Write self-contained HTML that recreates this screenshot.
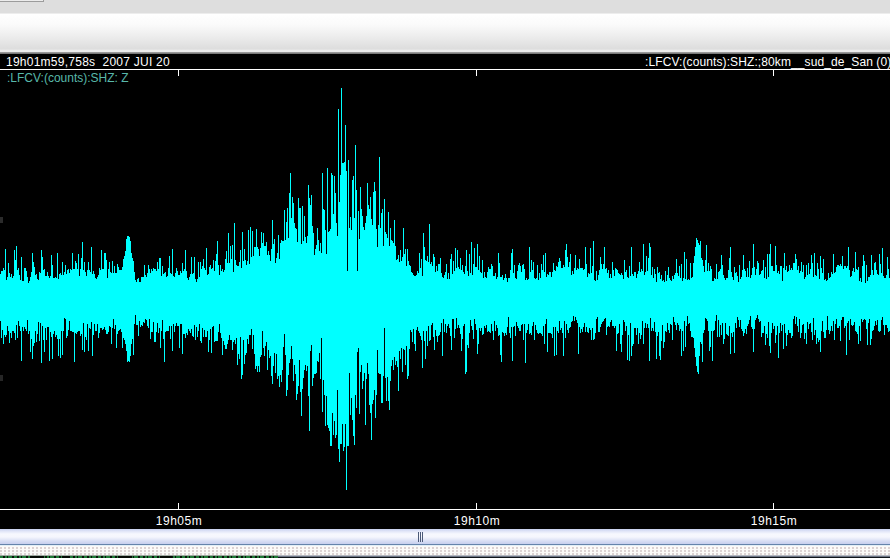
<!DOCTYPE html>
<html><head><meta charset="utf-8"><title>Seismogram</title>
<style>
html,body{margin:0;padding:0;}
body{width:890px;height:558px;overflow:hidden;background:#000;position:relative;font-family:"Liberation Sans",Arial,sans-serif;font-size:12px;line-height:14px;color:#fff;}
.abs{position:absolute;}
#topbar{left:0;top:0;width:890px;height:13px;background:#dedede;}
#topbox{left:0;top:0;width:43px;height:1px;background:#ececec;border-bottom:1px solid #9c9c9c;border-right:1px solid #9c9c9c;}
#toolbar{left:0;top:13px;width:890px;height:39px;background:linear-gradient(#e4e4e4 0px,#ffffff 1.5px,#fafafa 12px,#ececec 24px,#dedede 35px,#dedede 36px,#ececec 37.5px,#ececec 39px);}
#tbline{left:0;top:52px;width:890px;height:2px;background:linear-gradient(#a8a8a8,#6a6a6a);}
#plot{left:0;top:54px;width:890px;height:475px;background:#000;}
.t{white-space:nowrap;height:14px;}
#t1{left:6px;top:55px;letter-spacing:0.25px;}
#t2{left:645px;top:55px;letter-spacing:0.1px;}
#t3{left:7px;top:71px;color:#58b8aa;}
.hl{left:0;width:890px;height:1px;background:#fff;}
.tk{width:1px;background:#fff;}
.lb{width:60px;text-align:center;top:514px;letter-spacing:0.5px;}
#sb{left:0;top:529px;width:890px;height:17px;background:linear-gradient(#c6cfec 0px,#dfe4f7 2px,#f7f8fe 5px,#f5f6fd 8px,#d8def4 12px,#c6cfee 15px,#6584ab 15px,#6584ab 16px,#e2eef6 16px,#e2eef6 17px);}
#grip i{position:absolute;top:0;width:1px;height:10px;background:#4c5a78;}
#dots{left:0;top:546px;width:890px;height:9px;background-color:#fbfaf8;background-image:radial-gradient(circle at 1px 1px,#dcd3d3 0.8px,transparent 1.2px);background-size:4px 3px;background-position:0 1px;}
#bot0{left:0;top:555px;width:890px;height:3px;background:linear-gradient(#b4b8c0 0,#b4b8c0 1px,#6c7484 1px,#6c7484 2px,#10151b 2px,#10151b 3px);}
#bot1{left:0;top:555px;width:278px;height:1px;background:#9fa9a1;}
#bot{left:0;top:556px;width:278px;height:2px;background-color:#1f7a36;background-image:linear-gradient(90deg,transparent 0,transparent 30px,#050a05 30px,#050a05 44px,transparent 44px,transparent 62px,#050a05 62px,#050a05 70px,transparent 70px,transparent 118px,#050a05 118px,#050a05 132px,transparent 132px,transparent 160px,#050a05 160px,#050a05 172px,transparent 172px),repeating-linear-gradient(90deg,transparent 0,transparent 3px,#07140a 3px,#07140a 5px,transparent 5px,transparent 7px,#07140a 7px,#07140a 8px,transparent 8px,transparent 12px,#07140a 12px,#07140a 14px);}
</style></head><body>
<div class="abs" id="topbar"></div><div class="abs" id="topbox"></div>
<div class="abs" id="toolbar"></div><div class="abs" id="tbline"></div>
<div class="abs" id="plot"></div>
<div class="abs t" id="t1">19h01m59,758s&nbsp; 2007 JUI 20</div>
<div class="abs t" id="t2">:LFCV:(counts):SHZ:;80km__sud_de_San (0)</div>
<div class="abs hl" style="top:69px"></div>
<div class="abs t" id="t3">:LFCV:(counts):SHZ: Z</div>
<div class="abs tk" style="left:178px;top:70px;height:6px"></div>
<div class="abs tk" style="left:476px;top:70px;height:6px"></div>
<div class="abs tk" style="left:773px;top:70px;height:6px"></div>
<svg class="abs" style="left:0;top:0" width="890" height="558" viewBox="0 0 890 558" shape-rendering="crispEdges"><path d="M0.5 274V321M1.5 271V338M2.5 271V330M3.5 268V344M4.5 270V335M5.5 249V337M6.5 280V335M7.5 277V326M8.5 263V331M9.5 273V343M10.5 277V333M11.5 274V338M12.5 278V331M13.5 276V331M14.5 250V333M15.5 260V340M16.5 246V325M17.5 270V338M18.5 268V321M19.5 275V326M20.5 280V331M21.5 257V361M22.5 281V327M23.5 281V331M24.5 268V327M25.5 268V329M26.5 271V331M27.5 277V320M28.5 283V334M29.5 281V331M30.5 277V352M31.5 272V339M32.5 253V359M33.5 262V346M34.5 267V343M35.5 275V331M36.5 274V342M37.5 279V334M38.5 280V322M39.5 272V341M40.5 273V323M41.5 250V363M42.5 257V326M43.5 270V340M44.5 269V352M45.5 276V328M46.5 276V340M47.5 272V327M48.5 276V327M49.5 278V361M50.5 276V332M51.5 255V337M52.5 265V359M53.5 278V334M54.5 278V331M55.5 277V337M56.5 278V335M57.5 253V339M58.5 279V356M59.5 274V339M60.5 273V358M61.5 275V331M62.5 262V355M63.5 275V331M64.5 272V318M65.5 265V319M66.5 274V338M67.5 270V336M68.5 269V330M69.5 273V321M70.5 269V331M71.5 270V331M72.5 253V332M73.5 269V332M74.5 269V362M75.5 261V333M76.5 263V334M77.5 269V332M78.5 254V331M79.5 276V331M80.5 269V336M81.5 258V334M82.5 242V350M83.5 270V323M84.5 262V352M85.5 272V337M86.5 276V340M87.5 270V324M88.5 262V351M89.5 270V328M90.5 272V329M91.5 247V322M92.5 274V356M93.5 271V335M94.5 274V324M95.5 278V331M96.5 279V331M97.5 277V324M98.5 275V338M99.5 268V333M100.5 270V328M101.5 250V328M102.5 269V330M103.5 269V329M104.5 253V327M105.5 253V330M106.5 260V334M107.5 278V334M108.5 269V332M109.5 262V326M110.5 272V327M111.5 273V344M112.5 261V328M113.5 273V319M114.5 266V329M115.5 273V325M116.5 273V348M117.5 264V334M118.5 267V331M119.5 270V330M120.5 270V329M121.5 270V332M122.5 267V348M123.5 259V338M124.5 256V340M125.5 251V344M126.5 239V351M127.5 236V362M128.5 236V361M129.5 237V362M130.5 241V356M131.5 253V344M132.5 258V339M133.5 261V355M134.5 272V324M135.5 280V315M136.5 282V325M137.5 279V325M138.5 278V336M139.5 282V321M140.5 282V327M141.5 277V325M142.5 277V326M143.5 277V322M144.5 265V323M145.5 275V319M146.5 277V320M147.5 273V326M148.5 265V328M149.5 269V319M150.5 273V339M151.5 269V332M152.5 271V332M153.5 268V322M154.5 269V342M155.5 269V342M156.5 271V332M157.5 262V323M158.5 269V333M159.5 258V328M160.5 258V348M161.5 276V331M162.5 266V320M163.5 274V339M164.5 273V362M165.5 272V332M166.5 277V331M167.5 276V331M168.5 268V331M169.5 256V326M170.5 273V339M171.5 274V326M172.5 249V351M173.5 276V324M174.5 277V332M175.5 273V326M176.5 268V323M177.5 271V326M178.5 275V326M179.5 275V348M180.5 271V324M181.5 273V324M182.5 263V354M183.5 271V334M184.5 269V334M185.5 250V338M186.5 271V333M187.5 278V335M188.5 280V329M189.5 277V331M190.5 274V333M191.5 257V329M192.5 274V336M193.5 273V337M194.5 257V325M195.5 279V340M196.5 282V327M197.5 279V337M198.5 262V331M199.5 277V324M200.5 262V341M201.5 269V343M202.5 266V328M203.5 259V337M204.5 268V330M205.5 270V337M206.5 248V337M207.5 275V331M208.5 274V352M209.5 267V340M210.5 265V329M211.5 269V353M212.5 268V327M213.5 260V326M214.5 271V342M215.5 261V341M216.5 254V341M217.5 241V341M218.5 265V332M219.5 275V324M220.5 265V333M221.5 271V338M222.5 269V355M223.5 272V341M224.5 270V345M225.5 259V349M226.5 251V349M227.5 263V344M228.5 233V340M229.5 263V335M230.5 246V340M231.5 259V340M232.5 245V350M233.5 272V342M234.5 223V340M235.5 260V344M236.5 265V338M237.5 266V365M238.5 266V354M239.5 262V359M240.5 250V337M241.5 268V379M242.5 232V375M243.5 261V340M244.5 249V364M245.5 260V355M246.5 265V353M247.5 261V339M248.5 230V344M249.5 264V335M250.5 227V335M251.5 257V329M252.5 231V349M253.5 256V335M254.5 247V354M255.5 247V369M256.5 229V366M257.5 247V372M258.5 249V366M259.5 256V372M260.5 248V357M261.5 232V355M262.5 243V331M263.5 233V348M264.5 246V356M265.5 246V346M266.5 242V342M267.5 255V370M268.5 251V350M269.5 255V358M270.5 261V356M271.5 249V376M272.5 220V384M273.5 244V366M274.5 239V353M275.5 263V373M276.5 258V354M277.5 253V379M278.5 235V376M279.5 259V387M280.5 243V375M281.5 240V382M282.5 241V370M283.5 241V347M284.5 210V334M285.5 240V355M286.5 222V396M287.5 208V390M288.5 238V375M289.5 193V363M290.5 173V359M291.5 218V346M292.5 197V359M293.5 203V381M294.5 223V365M295.5 228V374M296.5 229V400M297.5 242V394M298.5 198V386M299.5 208V360M300.5 208V392M301.5 244V416M302.5 206V389M303.5 241V378M304.5 216V370M305.5 237V365M306.5 243V371M307.5 236V366M308.5 185V396M309.5 198V431M310.5 205V351M311.5 195V345M312.5 226V386M313.5 233V378M314.5 255V374M315.5 249V374M316.5 245V373M317.5 228V361M318.5 240V362M319.5 251V353M320.5 243V379M321.5 253V338M322.5 173V412M323.5 209V380M324.5 210V395M325.5 230V426M326.5 254V396M327.5 168V425M328.5 232V428M329.5 231V431M330.5 229V446M331.5 173V446M332.5 175V413M333.5 214V435M334.5 176V421M335.5 193V438M336.5 223V435M337.5 236V390M338.5 109V449M339.5 202V462M340.5 175V444M341.5 88V444M342.5 163V424M343.5 163V451M344.5 162V447M345.5 125V424M346.5 171V490M347.5 271V446M348.5 160V446M349.5 228V373M350.5 217V415M351.5 230V398M352.5 180V420M353.5 176V436M354.5 218V445M355.5 145V395M356.5 190V408M357.5 271V352M358.5 211V348M359.5 239V414M360.5 187V372M361.5 209V365M362.5 216V389M363.5 227V381M364.5 230V373M365.5 223V425M366.5 216V379M367.5 183V363M368.5 205V374M369.5 209V405M370.5 197V413M371.5 219V440M372.5 225V404M373.5 192V400M374.5 182V390M375.5 191V418M376.5 229V395M377.5 247V350M378.5 225V373M379.5 157V374M380.5 228V374M381.5 213V403M382.5 209V403M383.5 246V376M384.5 199V328M385.5 232V378M386.5 234V401M387.5 238V377M388.5 212V401M389.5 246V410M390.5 228V381M391.5 240V366M392.5 241V360M393.5 243V370M394.5 220V357M395.5 246V365M396.5 260V361M397.5 259V367M398.5 255V391M399.5 262V351M400.5 250V359M401.5 261V348M402.5 257V372M403.5 228V349M404.5 254V350M405.5 249V365M406.5 266V346M407.5 249V379M408.5 261V376M409.5 265V349M410.5 266V330M411.5 272V332M412.5 273V342M413.5 275V329M414.5 276V344M415.5 276V351M416.5 275V330M417.5 271V327M418.5 273V331M419.5 253V333M420.5 268V336M421.5 259V340M422.5 276V368M423.5 233V331M424.5 247V341M425.5 260V359M426.5 261V331M427.5 256V346M428.5 262V326M429.5 224V341M430.5 264V340M431.5 262V325M432.5 266V323M433.5 254V337M434.5 257V350M435.5 272V330M436.5 266V336M437.5 271V342M438.5 264V336M439.5 264V335M440.5 258V332M441.5 273V323M442.5 277V356M443.5 278V319M444.5 275V332M445.5 272V324M446.5 264V333M447.5 279V326M448.5 273V324M449.5 279V328M450.5 259V336M451.5 254V350M452.5 274V319M453.5 261V319M454.5 271V338M455.5 248V329M456.5 268V318M457.5 250V328M458.5 267V325M459.5 269V328M460.5 258V334M461.5 270V351M462.5 265V339M463.5 272V326M464.5 274V324M465.5 266V374M466.5 250V372M467.5 271V345M468.5 276V348M469.5 254V333M470.5 273V320M471.5 242V326M472.5 275V330M473.5 264V339M474.5 248V319M475.5 267V324M476.5 267V330M477.5 244V354M478.5 270V344M479.5 256V328M480.5 272V331M481.5 273V328M482.5 260V335M483.5 278V334M484.5 272V326M485.5 277V328M486.5 278V325M487.5 272V332M488.5 267V331M489.5 269V332M490.5 269V333M491.5 264V324M492.5 266V331M493.5 276V340M494.5 276V321M495.5 273V331M496.5 279V325M497.5 277V328M498.5 253V336M499.5 263V335M500.5 277V355M501.5 277V362M502.5 275V332M503.5 280V333M504.5 278V336M505.5 274V333M506.5 278V335M507.5 282V327M508.5 278V317M509.5 278V333M510.5 270V338M511.5 253V327M512.5 249V361M513.5 273V327M514.5 265V326M515.5 278V336M516.5 279V322M517.5 271V326M518.5 265V328M519.5 263V331M520.5 266V331M521.5 272V325M522.5 265V324M523.5 264V340M524.5 269V324M525.5 280V363M526.5 278V333M527.5 280V330M528.5 279V324M529.5 247V334M530.5 272V333M531.5 260V335M532.5 270V326M533.5 262V322M534.5 278V340M535.5 279V325M536.5 278V330M537.5 265V333M538.5 280V334M539.5 273V333M540.5 278V333M541.5 264V334M542.5 270V336M543.5 255V326M544.5 272V344M545.5 253V324M546.5 277V319M547.5 274V352M548.5 275V333M549.5 272V333M550.5 272V333M551.5 277V334M552.5 272V338M553.5 263V327M554.5 270V356M555.5 271V327M556.5 266V355M557.5 267V331M558.5 262V333M559.5 258V321M560.5 261V330M561.5 268V328M562.5 268V333M563.5 265V356M564.5 267V321M565.5 250V338M566.5 244V324M567.5 257V330M568.5 267V333M569.5 262V328M570.5 254V327M571.5 275V322M572.5 271V321M573.5 274V316M574.5 268V321M575.5 255V317M576.5 270V320M577.5 268V323M578.5 269V354M579.5 259V327M580.5 268V333M581.5 268V329M582.5 268V332M583.5 270V327M584.5 269V323M585.5 247V332M586.5 264V327M587.5 277V332M588.5 273V333M589.5 274V328M590.5 248V330M591.5 273V340M592.5 266V328M593.5 241V340M594.5 280V339M595.5 281V333M596.5 271V319M597.5 280V317M598.5 275V332M599.5 270V332M600.5 257V327M601.5 264V324M602.5 269V322M603.5 264V321M604.5 247V319M605.5 269V318M606.5 268V335M607.5 273V327M608.5 270V326M609.5 278V327M610.5 274V322M611.5 278V320M612.5 262V326M613.5 270V326M614.5 276V328M615.5 268V326M616.5 269V351M617.5 270V334M618.5 273V333M619.5 274V324M620.5 275V344M621.5 273V352M622.5 275V335M623.5 279V320M624.5 260V322M625.5 272V331M626.5 270V326M627.5 277V360M628.5 278V335M629.5 266V361M630.5 276V323M631.5 247V356M632.5 274V346M633.5 276V344M634.5 272V328M635.5 272V328M636.5 278V335M637.5 274V328M638.5 271V344M639.5 262V333M640.5 272V339M641.5 269V335M642.5 271V321M643.5 244V344M644.5 275V328M645.5 272V323M646.5 256V328M647.5 271V324M648.5 258V328M649.5 243V361M650.5 247V318M651.5 275V331M652.5 267V328M653.5 278V331M654.5 269V322M655.5 274V332M656.5 282V359M657.5 267V336M658.5 273V332M659.5 272V356M660.5 279V360M661.5 275V341M662.5 281V325M663.5 280V348M664.5 282V342M665.5 271V331M666.5 281V332M667.5 275V323M668.5 267V330M669.5 278V333M670.5 280V324M671.5 281V325M672.5 276V340M673.5 279V317M674.5 275V322M675.5 273V325M676.5 259V330M677.5 273V323M678.5 276V325M679.5 266V331M680.5 278V329M681.5 264V356M682.5 281V331M683.5 278V351M684.5 252V321M685.5 279V347M686.5 259V326M687.5 280V316M688.5 279V324M689.5 280V323M690.5 263V331M691.5 278V337M692.5 277V337M693.5 263V338M694.5 256V348M695.5 247V357M696.5 238V366M697.5 240V372M698.5 243V374M699.5 245V356M700.5 241V342M701.5 258V344M702.5 260V362M703.5 266V333M704.5 272V330M705.5 260V318M706.5 245V319M707.5 271V321M708.5 263V331M709.5 271V351M710.5 266V347M711.5 269V331M712.5 281V361M713.5 281V331M714.5 278V330M715.5 279V321M716.5 264V315M717.5 279V337M718.5 272V320M719.5 271V337M720.5 269V325M721.5 255V335M722.5 265V323M723.5 275V344M724.5 278V339M725.5 280V323M726.5 278V334M727.5 278V335M728.5 270V336M729.5 258V326M730.5 247V354M731.5 272V333M732.5 277V337M733.5 280V332M734.5 267V353M735.5 273V323M736.5 272V328M737.5 276V317M738.5 282V320M739.5 265V327M740.5 279V320M741.5 277V329M742.5 270V331M743.5 255V336M744.5 269V333M745.5 271V329M746.5 277V334M747.5 268V326M748.5 277V324M749.5 261V320M750.5 278V316M751.5 275V327M752.5 268V329M753.5 244V352M754.5 267V329M755.5 275V320M756.5 269V318M757.5 261V315M758.5 263V319M759.5 275V322M760.5 274V321M761.5 271V337M762.5 270V333M763.5 260V333M764.5 278V326M765.5 267V345M766.5 279V334M767.5 254V338M768.5 277V322M769.5 254V346M770.5 244V353M771.5 266V333M772.5 266V323M773.5 271V329M774.5 271V326M775.5 246V343M776.5 265V335M777.5 273V326M778.5 271V358M779.5 274V333M780.5 266V323M781.5 266V331M782.5 281V325M783.5 268V349M784.5 253V324M785.5 270V333M786.5 266V346M787.5 272V335M788.5 271V330M789.5 265V333M790.5 270V333M791.5 268V338M792.5 270V336M793.5 263V319M794.5 263V316M795.5 254V324M796.5 259V317M797.5 270V326M798.5 266V332M799.5 273V319M800.5 271V338M801.5 262V333M802.5 272V325M803.5 265V324M804.5 279V339M805.5 277V333M806.5 265V344M807.5 275V322M808.5 263V329M809.5 274V324M810.5 269V323M811.5 255V332M812.5 263V340M813.5 277V318M814.5 253V335M815.5 275V330M816.5 276V344M817.5 263V338M818.5 269V342M819.5 279V340M820.5 256V352M821.5 268V331M822.5 273V321M823.5 259V332M824.5 280V338M825.5 279V338M826.5 281V330M827.5 280V316M828.5 273V330M829.5 278V334M830.5 277V331M831.5 272V326M832.5 274V331M833.5 254V321M834.5 273V340M835.5 272V324M836.5 267V319M837.5 265V328M838.5 265V328M839.5 266V326M840.5 264V341M841.5 266V320M842.5 256V317M843.5 269V317M844.5 266V328M845.5 266V326M846.5 268V355M847.5 266V323M848.5 247V321M849.5 270V340M850.5 277V319M851.5 276V325M852.5 271V326M853.5 268V325M854.5 272V322M855.5 252V331M856.5 269V332M857.5 270V334M858.5 267V344M859.5 281V326M860.5 278V341M861.5 282V319M862.5 266V322M863.5 255V320M864.5 261V319M865.5 283V320M866.5 265V329M867.5 281V345M868.5 277V323M869.5 277V319M870.5 275V345M871.5 255V339M872.5 270V331M873.5 275V330M874.5 263V326M875.5 262V321M876.5 270V325M877.5 274V320M878.5 275V331M879.5 254V332M880.5 264V331M881.5 273V320M882.5 248V317M883.5 276V325M884.5 278V335M885.5 278V325M886.5 275V325M887.5 257V328M888.5 269V332M889.5 278V331" stroke="#00ffff" stroke-width="1" fill="none"/></svg>
<div class="abs tk" style="left:178px;top:503px;height:6px"></div>
<div class="abs tk" style="left:476px;top:503px;height:6px"></div>
<div class="abs tk" style="left:773px;top:503px;height:6px"></div>
<div class="abs hl" style="top:509px"></div>
<div class="abs lb" style="left:149px">19h05m</div>
<div class="abs lb" style="left:447px">19h10m</div>
<div class="abs lb" style="left:744px">19h15m</div>
<div class="abs" style="left:0;top:217px;width:3px;height:6px;background:#2b2b2b"></div><div class="abs" style="left:0;top:375px;width:3px;height:6px;background:#262626"></div>
<div class="abs" id="sb"></div>
<div class="abs" id="grip" style="left:418px;top:532px;width:7px;height:9px"><i style="left:0"></i><i style="left:2px"></i><i style="left:4px"></i></div>
<div class="abs" id="dots"></div>
<div class="abs" id="bot0"></div><div class="abs" id="bot1"></div><div class="abs" id="bot"></div>
</body></html>
